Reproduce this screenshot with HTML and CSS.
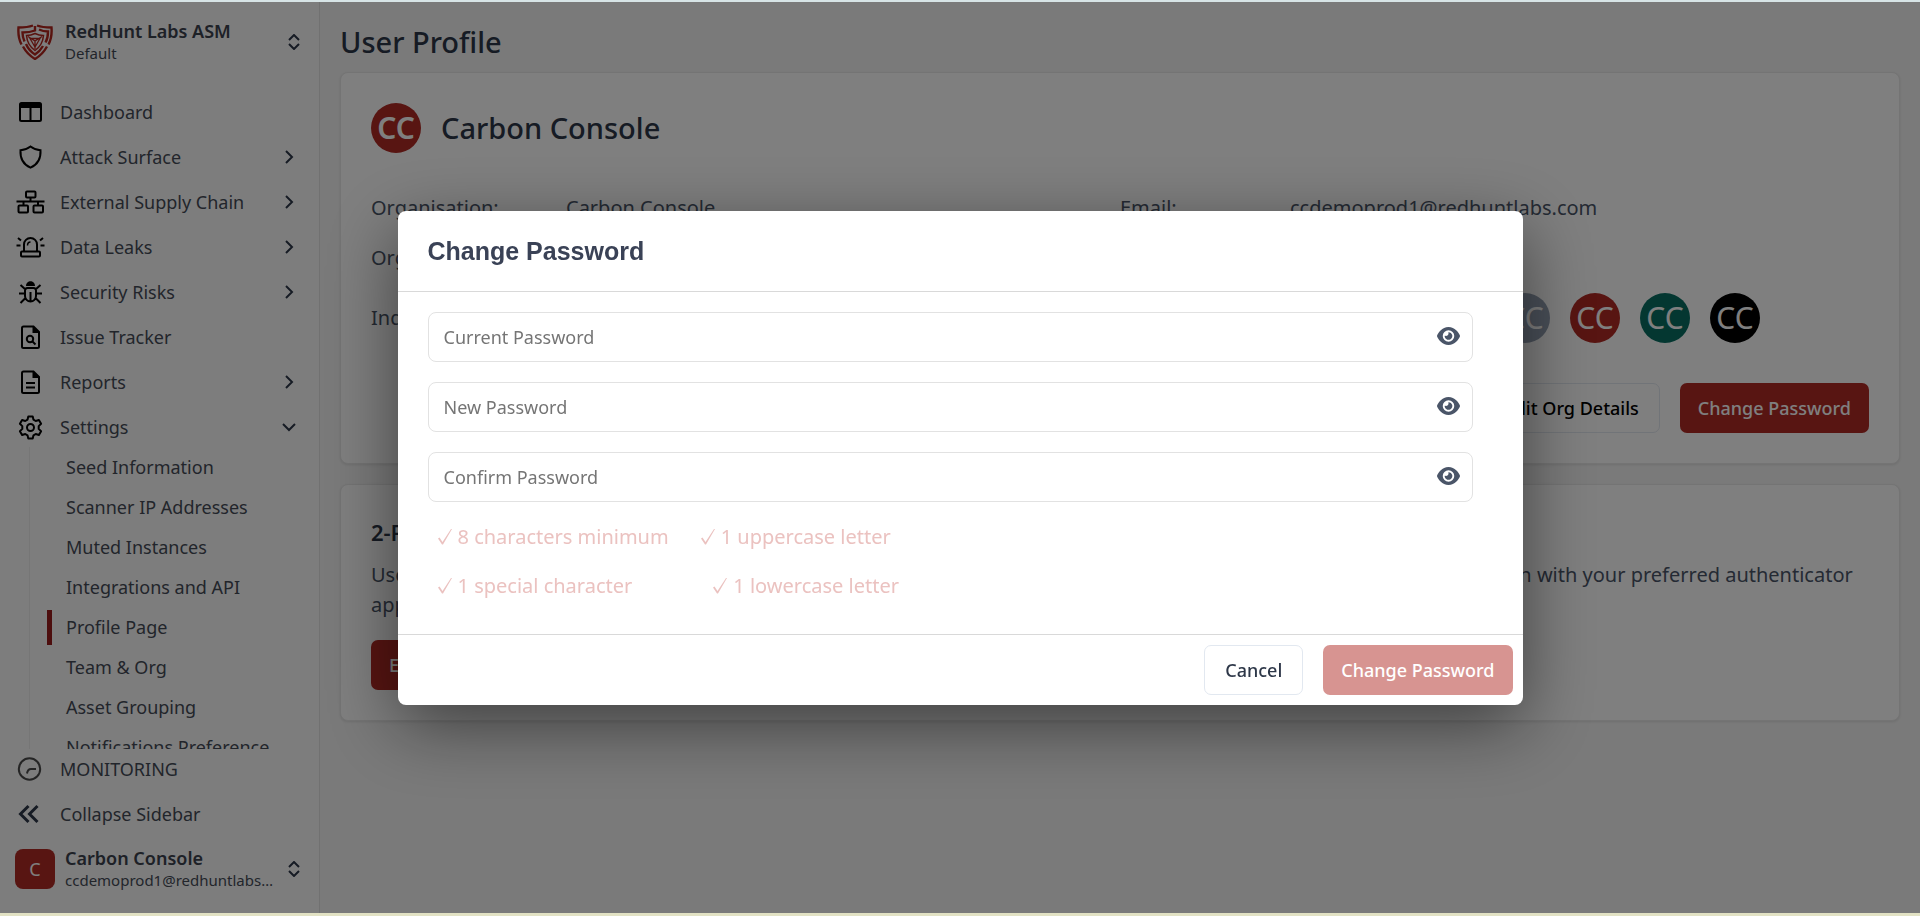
FILE: index.html
```html
<!DOCTYPE html>
<html lang="en">
<head>
  <meta charset="UTF-8">
  <meta name="viewport" content="width=device-width, initial-scale=1.0">
  <title>User Profile</title>
  <link rel="stylesheet" href="styles.css">
</head>
<body>
  <div class="app">
    <aside class="sidebar">
      <button type="button" class="switcher">
        <svg class="logo" viewBox="0 0 36 36" fill="none" stroke="#b3261e" stroke-width="2.400">
          <path d="M16 1.500C12 3 7 3.500 1.500 3.500C1 10 1.500 15 4.500 20.500M20 1.500C24 3 29 3.500 34.500 3.500C35 10 34.500 15 31.500 20.500M6 22.500C9 28 13 32 18 35C23 32 27 28 30 22.500"/>
          <path d="M18 2v4.500C14 8 10 8.500 5.500 8.500C5.500 12 6 14 7.500 17.500M22 5.500C25 7 28 7.500 31 7.500C31 12 30.500 15 28.500 18.500M9 20C11 24.500 14 28 18 30.500C22 28 24 25.500 26 22"/>
          <path stroke-width="1.500" d="M18 9.500C15 11 12.500 11.500 9.500 11.500C10 18 13 23 18 26.500C23 23 26 18 26.500 11.500C23.500 11.500 21 11 18 9.500z"/>
          <path stroke-width="1.300" d="M11 12.500L18 17L25 12.500M18 17v8M13 14.500h10L18 23z"/>
        </svg>
        <span class="who">
          <strong>RedHunt Labs ASM</strong>
          <small>Default</small>
        </span>
        <svg class="updown" viewBox="0 0 12 16"><path d="M1 6l5-5 5 5M1 10l5 5 5-5"/></svg>
      </button>

      <nav class="menu">
        <a href="#" class="item">
          <svg class="icon" viewBox="0 0 28 28"><rect x="4" y="5" width="21" height="18" rx="1.500"/><path d="M4 8h21M14.500 8v15" /><path stroke="none" fill="currentColor" d="M4 5h21v5H4z"/></svg>
          <span>Dashboard</span>
        </a>
        <a href="#" class="item">
          <svg class="icon" viewBox="0 0 28 28"><path d="M14.500 3.500C12 5.500 8 7 4.500 7.200C4 15.200 7.500 21.500 14.500 24.700C21.500 21.500 25 15.200 24.500 7.200C21 7 17 5.500 14.500 3.500z"/></svg>
          <span>Attack Surface</span>
          <svg class="arrow" viewBox="0 0 12 12"><path d="M3 0l6 6-6 6"/></svg>
        </a>
        <a href="#" class="item">
          <svg class="icon" viewBox="0 0 28 28"><rect x="10" y="3.500" width="9.500" height="6" rx="1"/><rect x="2.500" y="17.500" width="9.500" height="7" rx="1"/><rect x="17.500" y="17.500" width="9.500" height="7" rx="1"/><path d="M.5 13.500h28M14.500 9.500v4M7.500 13.500v4M22 13.500v4"/></svg>
          <span>External Supply Chain</span>
          <svg class="arrow" viewBox="0 0 12 12"><path d="M3 0l6 6-6 6"/></svg>
        </a>
        <a href="#" class="item">
          <svg class="icon" viewBox="0 0 28 28"><rect x="5" y="18.500" width="19" height="5" rx="1"/><path d="M8 18v-6.500a6.500 6.500 0 0 1 13 0V18M.5 12.500h4M24.500 12.500h4M2 5l3 2.500M27 5l-3 2.500"/><path stroke-width="1.500" d="M11.500 12.500c0-2.500 1-3.500 3-3.500"/></svg>
          <span>Data Leaks</span>
          <svg class="arrow" viewBox="0 0 12 12"><path d="M3 0l6 6-6 6"/></svg>
        </a>
        <a href="#" class="item">
          <svg class="icon" viewBox="0 0 28 28"><path d="M9 12.500c0-2 1-2.500 2.500-2.500h6c1.500 0 2.500.5 2.500 2.500v5.500a5.500 5.500 0 0 1-11 0zM14.500 14v9M3 15.500h6M20 15.500h6M4.500 7l5 4.500M24.500 7l-5 4.500M4.500 25l5-5M24.500 25l-5-5"/><path stroke="none" fill="currentColor" d="M10 8c0-6.500 9-6.500 9 0z"/></svg>
          <span>Security Risks</span>
          <svg class="arrow" viewBox="0 0 12 12"><path d="M3 0l6 6-6 6"/></svg>
        </a>
        <a href="#" class="item">
          <svg class="icon" viewBox="0 0 28 28"><path d="M7.500 3.500h10l5.500 5.500v14.500q0 1.500-1.500 1.500h-14q-1.500 0-1.500-1.500V5q0-1.500 1.500-1.500z"/><path stroke="none" fill="currentColor" d="M16.500 3l7 7h-7z"/><circle cx="14" cy="16" r="3.200"/><path d="M16.500 18.500l3 3"/></svg>
          <span>Issue Tracker</span>
        </a>
        <a href="#" class="item">
          <svg class="icon" viewBox="0 0 28 28"><path d="M7.500 3.500h10l5.500 5.500v14.500q0 1.500-1.500 1.500h-14q-1.500 0-1.500-1.500V5q0-1.500 1.500-1.500z"/><path stroke="none" fill="currentColor" d="M16.500 3l7 7h-7z"/><path d="M10 15h9M10 19.500h9"/></svg>
          <span>Reports</span>
          <svg class="arrow" viewBox="0 0 12 12"><path d="M3 0l6 6-6 6"/></svg>
        </a>
        <a href="#" class="item">
          <svg class="icon" viewBox="0 0 28 28"><path stroke-linejoin="round" d="M12.300 3.500h4.400l.8 3.200 2.200 1.300 3.200-1 2.200 3.800-2.400 2.300v2.800l2.400 2.300-2.200 3.800-3.200-1-2.200 1.300-.8 3.200h-4.400l-.8-3.200-2.200-1.300-3.200 1-2.200-3.800 2.400-2.300v-2.800l-2.400-2.300 2.200-3.800 3.200 1 2.200-1.300z"/><circle cx="14.500" cy="14.500" r="3.500"/></svg>
          <span>Settings</span>
          <svg class="arrow" viewBox="0 0 12 12"><path d="M0 3l6 6 6-6"/></svg>
        </a>
        <div class="submenu">
          <a href="#">Seed Information</a>
          <a href="#">Scanner IP Addresses</a>
          <a href="#">Muted Instances</a>
          <a href="#">Integrations and API</a>
          <a href="#" class="active">Profile Page</a>
          <a href="#">Team &amp; Org</a>
          <a href="#">Asset Grouping</a>
          <a href="#">Notifications Preference</a>
        </div>
      </nav>

      <div class="sidebar-bottom">
        <a href="#" class="item">
          <svg class="icon soft" viewBox="0 0 28 28"><circle cx="13.500" cy="14" r="10.700"/><path d="M11 18.500c.5-3 1.500-4.500 4-4.500h5"/></svg>
          <span>MONITORING</span>
        </a>
        <a href="#" class="item">
          <svg class="icon double" viewBox="0 0 28 28"><path d="M12.500 6l-8 8 8 8M21.500 6l-8 8 8 8"/></svg>
          <span>Collapse Sidebar</span>
        </a>
      </div>

      <button type="button" class="switcher account">
        <span class="square">C</span>
        <span class="who">
          <strong>Carbon Console</strong>
          <small>ccdemoprod1@redhuntlabs.com</small>
        </span>
        <svg class="updown" viewBox="0 0 12 16"><path d="M1 6l5-5 5 5M1 10l5 5 5-5"/></svg>
      </button>
    </aside>

    <main class="content">
      <h1>User Profile</h1>

      <section class="card">
        <div class="profile">
          <span class="avatar red bold">CC</span>
          <h2>Carbon Console</h2>
        </div>
        <div class="details">
          <div class="detail">
            <span>Organisation:</span>
            <span>Carbon Console</span>
          </div>
          <div class="detail right">
            <span>Email:</span>
            <span>ccdemoprod1@redhuntlabs.com</span>
          </div>
          <div class="detail">
            <span>Organisation Size:</span>
            <span>1-10</span>
          </div>
          <div class="detail right">
            <span>Role:</span>
            <span>Admin</span>
          </div>
          <div class="detail tall">
            <span>Industry:</span>
            <span>Security</span>
          </div>
          <div class="detail right tall">
            <span>Avatar:</span>
            <div class="avatars">
              <span class="avatar blue">CC</span>
              <span class="avatar teal">CC</span>
              <span class="avatar black">CC</span>
              <span class="avatar grey">CC</span>
              <span class="avatar red">CC</span>
              <span class="avatar teal">CC</span>
              <span class="avatar black">CC</span>
            </div>
          </div>
        </div>
        <div class="actions">
          <button type="button" class="btn btn-plain">Edit Org Details</button>
          <button type="button" class="btn btn-red">Change Password</button>
        </div>
      </section>

      <section class="card">
        <h3>2-Factor Authentication</h3>
        <p>Use the two-factor authentication to add an additional layer of security to your account. Scan the provided QR code to log in with your preferred authenticator app to get started.</p>
        <button type="button" class="btn btn-red">Enable</button>
      </section>
    </main>
  </div>

  <div class="overlay">
    <form class="modal" role="dialog" aria-labelledby="modalTitle">
      <h2 class="modal-title" id="modalTitle">Change Password</h2>

      <div class="modal-body">
        <div class="field">
          <input type="password" id="currentPassword" aria-label="Current Password" placeholder="Current Password">
          <button type="button" class="eye" aria-label="Show current password">
            <svg viewBox="0 0 576 512"><path d="M288 32c-80.800 0-145.500 36.800-192.600 80.600C48.600 156 17.300 208 2.500 243.700c-3.300 7.900-3.300 16.700 0 24.600C17.300 304 48.600 356 95.400 399.400C142.500 443.200 207.200 480 288 480s145.500-36.800 192.600-80.600c46.800-43.500 78.100-95.400 93-131.100c3.300-7.900 3.300-16.700 0-24.600c-14.900-35.700-46.200-87.700-93-131.100C433.500 68.800 368.800 32 288 32zM144 256a144 144 0 1 1 288 0 144 144 0 1 1-288 0zm144-64c0 35.300-28.700 64-64 64c-7.100 0-13.900-1.200-20.300-3.300c-5.500-1.800-11.900 1.600-11.700 7.400c.3 6.900 1.300 13.800 3.200 20.700c13.700 51.200 66.400 81.600 117.600 67.900s81.600-66.400 67.900-117.600c-11.100-41.500-47.800-69.400-88.600-71.100c-5.800-.2-9.200 6.100-7.400 11.700c2.100 6.400 3.300 13.200 3.300 20.300z"/></svg>
          </button>
        </div>
        <div class="field">
          <input type="password" id="newPassword" aria-label="New Password" placeholder="New Password">
          <button type="button" class="eye" aria-label="Show new password">
            <svg viewBox="0 0 576 512"><path d="M288 32c-80.800 0-145.500 36.800-192.600 80.600C48.600 156 17.300 208 2.500 243.700c-3.300 7.900-3.300 16.700 0 24.600C17.300 304 48.600 356 95.400 399.400C142.500 443.200 207.200 480 288 480s145.500-36.800 192.600-80.600c46.800-43.500 78.100-95.400 93-131.100c3.300-7.900 3.300-16.700 0-24.600c-14.900-35.700-46.200-87.700-93-131.100C433.500 68.800 368.800 32 288 32zM144 256a144 144 0 1 1 288 0 144 144 0 1 1-288 0zm144-64c0 35.300-28.700 64-64 64c-7.100 0-13.900-1.200-20.300-3.300c-5.500-1.800-11.900 1.600-11.700 7.400c.3 6.900 1.300 13.800 3.200 20.700c13.700 51.200 66.400 81.600 117.600 67.900s81.600-66.400 67.900-117.600c-11.100-41.500-47.800-69.400-88.600-71.100c-5.800-.2-9.200 6.100-7.400 11.700c2.100 6.400 3.300 13.200 3.300 20.300z"/></svg>
          </button>
        </div>
        <div class="field">
          <input type="password" id="confirmPassword" aria-label="Confirm Password" placeholder="Confirm Password">
          <button type="button" class="eye" aria-label="Show confirmed password">
            <svg viewBox="0 0 576 512"><path d="M288 32c-80.800 0-145.500 36.800-192.600 80.600C48.600 156 17.300 208 2.500 243.700c-3.300 7.900-3.300 16.700 0 24.600C17.300 304 48.600 356 95.400 399.400C142.500 443.200 207.200 480 288 480s145.500-36.800 192.600-80.600c46.800-43.500 78.100-95.400 93-131.100c3.300-7.900 3.300-16.700 0-24.600c-14.900-35.700-46.200-87.700-93-131.100C433.500 68.800 368.800 32 288 32zM144 256a144 144 0 1 1 288 0 144 144 0 1 1-288 0zm144-64c0 35.300-28.700 64-64 64c-7.100 0-13.900-1.200-20.300-3.300c-5.500-1.800-11.900 1.600-11.700 7.400c.3 6.900 1.300 13.800 3.200 20.700c13.700 51.200 66.400 81.600 117.600 67.900s81.600-66.400 67.900-117.600c-11.100-41.500-47.800-69.400-88.600-71.100c-5.800-.2-9.200 6.100-7.400 11.700c2.100 6.400 3.300 13.200 3.300 20.300z"/></svg>
          </button>
        </div>

        <div class="rules">
          <div class="rule-row">
            <span class="rule"><svg viewBox="0 0 14 16"><path d="M0 9.500l1.500-1 3 4.500L13 0h1L5 15.500H4z"/></svg>8 characters minimum</span>
            <span class="rule"><svg viewBox="0 0 14 16"><path d="M0 9.500l1.500-1 3 4.500L13 0h1L5 15.500H4z"/></svg>1 uppercase letter</span>
          </div>
          <div class="rule-row wide">
            <span class="rule"><svg viewBox="0 0 14 16"><path d="M0 9.500l1.500-1 3 4.500L13 0h1L5 15.500H4z"/></svg>1 special character</span>
            <span class="rule"><svg viewBox="0 0 14 16"><path d="M0 9.500l1.500-1 3 4.500L13 0h1L5 15.500H4z"/></svg>1 lowercase letter</span>
          </div>
        </div>
      </div>

      <div class="modal-footer">
        <button type="button" class="btn btn-plain">Cancel</button>
        <button type="submit" class="btn btn-red" disabled>Change Password</button>
      </div>
    </form>
  </div>
</body>
</html>
```

FILE: styles.css
```css
* {
  box-sizing: border-box;
}
body {
  margin: 0;
  font-family: "Noto Sans", sans-serif;
  font-size: 20px;
  line-height: 30px;
  color: #4a5568;
  background: #f5f5f5;
}
h1, h2, h3, p {
  margin: 0;
}
a {
  color: inherit;
  text-decoration: none;
}
button, input {
  font: inherit;
  color: inherit;
}
.app {
  display: flex;
  height: 100vh;
}

/* Sidebar */
.sidebar {
  display: flex;
  flex-direction: column;
  flex: none;
  width: 320px;
  padding: 20px 0 25px;
  background: #fbfbfb;
  border-right: 1px solid #e2e2e2;
  font-size: 18px;
  color: #454b57;
}
.switcher {
  display: flex;
  align-items: center;
  gap: 12px;
  padding: 0 19px 0 17px;
  border: 0;
  background: none;
  text-align: left;
  cursor: pointer;
}
.logo {
  width: 36px;
  height: 36px;
}
.who {
  display: flex;
  flex-direction: column;
  flex: 1;
  min-width: 0;
  padding-right: 2px;
  line-height: 22px;
}
.who strong {
  font-size: 18px;
  font-weight: 600;
  color: #3c424e;
}
.who small {
  font-size: 15px;
  overflow: hidden;
  white-space: nowrap;
  text-overflow: ellipsis;
}
.updown {
  width: 12px;
  height: 16px;
}
.updown path, .arrow path {
  fill: none;
  stroke: #2d3748;
  stroke-width: 2;
}
.menu {
  flex: 1;
  min-height: 0;
  margin-top: 25px;
  overflow: hidden;
}
.item {
  display: flex;
  align-items: center;
  gap: 15px;
  height: 45px;
  padding: 0 24px 0 15px;
}
.item span {
  flex: 1;
}
.icon {
  width: 30px;
  height: 28px;
  color: #000;
  fill: none;
  stroke: currentColor;
  stroke-width: 2;
  overflow: visible;
}
.icon.soft {
  color: #4a4a4a;
}
.icon.double {
  color: #2d3748;
  stroke-width: 3;
}
.arrow {
  width: 12px;
  height: 12px;
  overflow: visible;
}
.submenu {
  margin: -2px 0 0 29px;
  border-left: 1px solid #ececec;
}
.submenu a {
  display: flex;
  align-items: center;
  height: 40px;
  padding-left: 36px;
}
.submenu .active::before {
  content: "";
  width: 5px;
  height: 35px;
  margin: 0 14px 0 -19px;
  background: #9b1c1c;
}
.sidebar-bottom {
  display: grid;
  gap: 5px;
}
.sidebar-bottom .item {
  height: 40px;
}
.account {
  gap: 10px;
  padding-left: 15px;
  margin-top: 13px;
}
.square {
  width: 40px;
  height: 40px;
  border-radius: 8px;
  background: #b02a24;
  color: #fff;
  line-height: 40px;
  text-align: center;
}

/* Page */
.content {
  flex: 1;
  padding: 20px;
}
h1 {
  margin-bottom: 9px;
  font-size: 29px;
  line-height: 43px;
  font-weight: 500;
  color: #2d3748;
}
.card {
  margin-bottom: 20px;
  padding: 30px;
  background: #fff;
  border: 1px solid #e8e8e8;
  border-radius: 8px;
  box-shadow: 0 1px 3px rgba(0, 0, 0, 0.1);
}
.profile {
  display: flex;
  align-items: center;
  gap: 20px;
}
.profile h2 {
  font-size: 29px;
  font-weight: 500;
  color: #2d3748;
}
.avatar {
  width: 50px;
  height: 50px;
  border-radius: 50%;
  color: #fff;
  font-size: 30px;
  line-height: 50px;
  text-align: center;
}
.bold {
  font-weight: 600;
}
.red {
  background: #b02a24;
}
.teal {
  background: #086f63;
}
.black {
  background: #000;
}
.grey {
  background: #94a0b2;
}
.blue {
  background: #2b6cb0;
}
.details {
  display: grid;
  grid-template-columns: 1fr 1fr;
  margin-top: 30px;
}
.detail {
  display: grid;
  grid-template-columns: 195px 1fr;
  align-items: center;
  height: 50px;
}
.detail.right {
  grid-template-columns: 170px 1fr;
}
.detail.tall {
  height: 70px;
}
.avatars {
  display: flex;
  gap: 20px;
}
.actions, .modal-footer {
  display: flex;
  justify-content: flex-end;
  gap: 20px;
}
.actions {
  margin-top: 30px;
}
.btn {
  height: 50px;
  padding: 0 20px;
  border: 0;
  border-radius: 7px;
  font-size: 18px;
  font-weight: 500;
  cursor: pointer;
}
.btn-plain {
  border: 1px solid #e2e8f0;
  background: #fff;
  color: #000;
}
.btn-red {
  padding: 0 18px;
  background: #b02a24;
  color: #fff;
}
.btn:disabled {
  opacity: 0.5;
  cursor: default;
}
h3 {
  margin-bottom: 11px;
  font-size: 22px;
  font-weight: 600;
  line-height: 34px;
  color: #2d3748;
}
.card p {
  margin-bottom: 20px;
}

/* Change password modal */
.overlay {
  position: fixed;
  inset: 0;
  display: flex;
  align-items: center;
  justify-content: center;
  background: rgba(0, 0, 0, 0.5);
  border-top: 2px solid #d7e4e6;
  border-bottom: 3px solid #e2e2c4;
}
.modal {
  width: 1125px;
  max-width: 95%;
  background: #fff;
  border-radius: 8px;
  box-shadow: 0 20px 70px rgba(0, 0, 0, 0.5);
}
.modal-title {
  padding: 25px 30px;
  border-bottom: 1px solid #d9d9d9;
  font-family: "Liberation Sans", Arial, sans-serif;
  font-size: 25px;
  font-weight: 700;
  color: #3a4256;
}
.modal-body {
  padding: 20px 50px 14px 30px;
}
.field {
  position: relative;
  margin-bottom: 20px;
}
.field input {
  display: block;
  width: 100%;
  height: 50px;
  padding: 0 60px 0 15px;
  border: 1px solid #e2e2e2;
  border-radius: 8px;
  background: #fff;
  font-size: 18px;
}
.field input::placeholder {
  color: #757575;
}
.eye {
  position: absolute;
  top: 12px;
  right: 13px;
  height: 25px;
  padding: 0;
  border: 0;
  background: none;
  cursor: pointer;
}
.eye svg {
  display: block;
  width: 23px;
  height: 24px;
  fill: #4a5568;
}
.rules {
  padding-left: 10px;
  color: #ebc2c0;
}
.rule-row {
  display: flex;
  gap: 32px;
  height: 49px;
}
.rule-row.wide {
  gap: 81px;
}
.rule {
  display: flex;
  align-items: center;
  gap: 6px;
  height: 30px;
}
.rule svg {
  width: 14px;
  height: 16px;
  fill: currentColor;
}
.modal-footer {
  padding: 10px;
  border-top: 1px solid #d9d9d9;
}
.modal-footer .btn-plain {
  color: #2d3748;
}
```
